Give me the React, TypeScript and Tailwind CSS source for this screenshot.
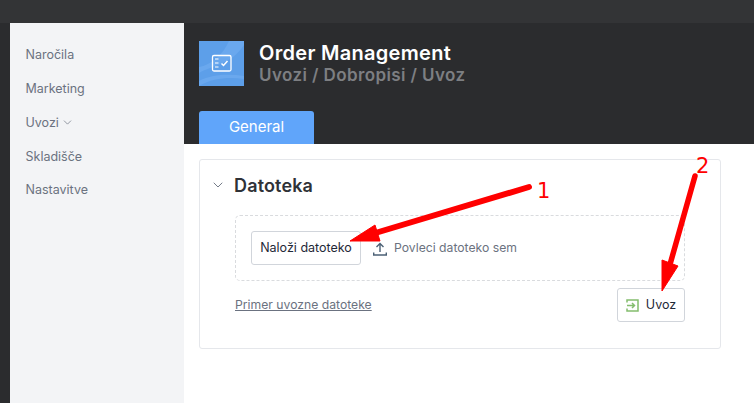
import { ChevronDown } from "lucide-react";

const navItems = ["Naročila", "Marketing", "Uvozi", "Skladišče", "Nastavitve"];

function Sidebar() {
  return (
    <aside className="w-[174px] shrink-0 bg-[#f3f4f6] pt-[16px] pl-[15.5px] text-[12.5px] text-[#6b7280]">
      {navItems.map((item) => (
        <div key={item} className="flex h-[33.7px] items-center gap-[2px]">
          {item}
          {item === "Uvozi" && <ChevronDown size={13} strokeWidth={1.3} className="mb-[2px]" />}
        </div>
      ))}
    </aside>
  );
}

function LogoTile() {
  return (
    <div className="h-[45px] w-[45px] shrink-0 bg-[#5d9fe9]">
      <svg width="45" height="45" viewBox="0 0 45 45" fill="none">
        <path d="M0 32C14 24 32 24 45 4V0H30C24 14 12 24 0 26Z" fill="#6aa8ee" />
        <path d="M0 40C14 33 30 33 45 35V38C30 36 14 37 0 45Z" fill="#6aa8ee" />
        <rect x="13.5" y="14.5" width="18.5" height="15.5" rx="1.5" stroke="white" strokeWidth="1.3" />
        <path d="M16 18H19.5M16 22H19.5M16 26H19.5" stroke="white" strokeWidth="1.2" />
        <path d="M22.5 22.5L24.5 24.5L28.5 20" stroke="white" strokeWidth="1.5" />
      </svg>
    </div>
  );
}

function Header() {
  return (
    <header className="h-[121px] bg-[#2b2c2e] pl-[15px]">
      <div className="flex h-[88px] items-start gap-[15px] pt-[18px]">
        <LogoTile />
        <div className="font-['Inter',sans-serif]">
          <div className="text-[20px] leading-[24px] font-semibold tracking-[0.3px] text-white">
            Order Management
          </div>
          <div className="text-[17px] leading-[21px] font-semibold tracking-[0.4px] text-[#7d7f82]">
            Uvozi / Dobropisi / Uvoz
          </div>
        </div>
      </div>
      <div className="flex h-[33px] w-[115px] items-center justify-center rounded-t-[3px] bg-[#60a5fa] text-[15px] text-white">
        General
      </div>
    </header>
  );
}

function UploadIcon() {
  return (
    <svg width="14" height="14" viewBox="0 0 14 14" fill="none" stroke="#4b6075" strokeWidth="1.4">
      <path d="M7 10V1.5M3.5 5L7 1.5L10.5 5" />
      <path d="M0.7 10.5V13H13.3V10.5" />
    </svg>
  );
}

function ImportIcon() {
  return (
    <svg width="13" height="13" viewBox="0 0 13 13" fill="none" stroke="#84bd6e" strokeWidth="1.5">
      <path d="M1 3.5V1H12V12H1V9.5" />
      <path d="M1 6.5H8.5M6 4L8.5 6.5L6 9" />
    </svg>
  );
}

function Card() {
  return (
    <section className="h-[190px] w-[522px] rounded-[3px] border border-[#e5e7eb] bg-white pt-[13px] pr-[35px] pl-[13px]">
      <div className="flex h-[24px] items-center gap-[8px]">
        <ChevronDown size={16} strokeWidth={1.4} className="-ml-[3px] text-[#6b7280]" />
        <h2 className="font-['Inter',sans-serif] text-[18px] font-semibold tracking-[0.15px] text-[#2f3237]">
          Datoteka
        </h2>
      </div>
      <div className="mt-[18px] ml-[22px] flex h-[66px] items-center rounded-[5px] border border-dashed border-[#d9dbde] pl-[15px]">
        <button className="h-[34px] w-[110px] rounded-[3px] border border-[#d1d5db] bg-white text-[12.5px] text-[#1f2937]">
          Naloži datoteko
        </button>
        <span className="mt-[1px] ml-[12px]">
          <UploadIcon />
        </span>
        <span className="ml-[7px] text-[12.2px] text-[#6b7280]">Povleci datoteko sem</span>
      </div>
      <div className="mt-[7px] ml-[22px] flex items-center justify-between">
        <a className="mt-[1px] text-[12.2px] text-[#6b7280] underline">Primer uvozne datoteke</a>
        <button className="flex h-[34px] w-[68px] items-center justify-center gap-[7px] rounded-[3px] border border-[#d1d5db] bg-white text-[12.5px] text-[#1f2937]">
          <ImportIcon />
          Uvoz
        </button>
      </div>
    </section>
  );
}

function Annotations() {
  return (
    <>
      <svg className="pointer-events-none absolute inset-0" width="754" height="403" fill="none">
        <path d="M529 187L372 234" stroke="#ff0000" strokeWidth="6" strokeLinecap="round" />
        <path d="M350 241L375 225L380 241Z" fill="#ff0000" stroke="#ff0000" />
        <path d="M695 176L669 268" stroke="#ff0000" strokeWidth="5.5" strokeLinecap="round" />
        <path d="M662 291L662 260L678 266Z" fill="#ff0000" stroke="#ff0000" />
      </svg>
      <span className="absolute top-[178px] left-[537px] font-['DejaVu_Sans',sans-serif] text-[21px] leading-[26px] text-[#ff0000]">1</span>
      <span className="absolute top-[153px] left-[696px] font-['DejaVu_Sans',sans-serif] text-[21px] leading-[26px] text-[#ff0000]">2</span>
    </>
  );
}

export default function App() {
  return (
    <div className="relative flex h-[403px] w-[754px] flex-col overflow-hidden bg-white font-['Inter',sans-serif]">
      <div className="h-[23px] shrink-0 bg-[#333436]" />
      <div className="flex min-h-0 flex-1">
        <div className="w-[10px] shrink-0 bg-[#2b2c2e]" />
        <Sidebar />
        <main className="min-w-0 flex-1">
          <Header />
          <div className="px-[15px] pt-[15px]">
            <Card />
          </div>
        </main>
      </div>
      <Annotations />
    </div>
  );
}
